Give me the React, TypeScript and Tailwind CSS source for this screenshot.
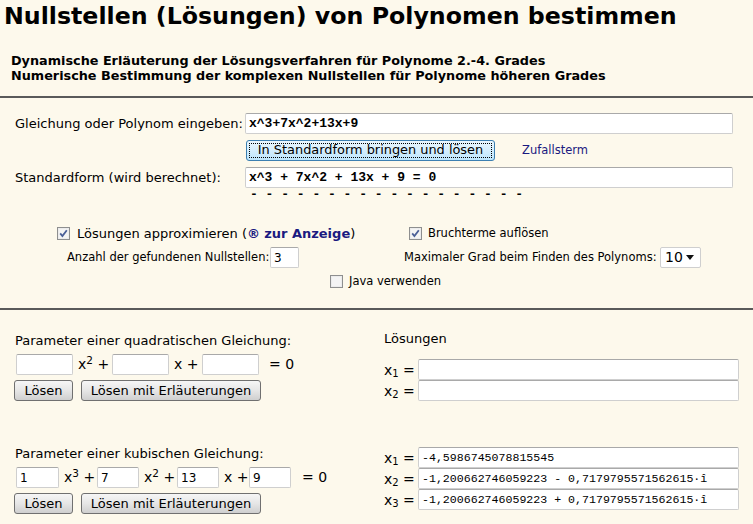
import React from "react";

const inputCls =
  "h-[21px] bg-white border border-[#cfcfcf] border-t-[#a9a9a9] rounded-[2px] px-[3px] outline-none text-black";
const btnCls =
  "h-[21px] rounded-[3px] border border-[#707070] bg-gradient-to-b from-[#f6f6f6] via-[#e6e6e6] to-[#cfcfcf] text-[13px] leading-none text-black whitespace-nowrap";

function Box({ checked }: { checked?: boolean }) {
  return (
    <svg width="13" height="13" viewBox="0 0 13 13" className="shrink-0">
      <rect x="0.5" y="0.5" width="12" height="12" fill="#ececec" stroke="#8e8f8f" />
      <rect x="2" y="2" width="9" height="9" fill="#f4f4f4" />
      {checked && (
        <path d="M3.2 6.4 L5.4 9 L9.8 3.2" fill="none" stroke="#4a5f97" strokeWidth="1.8" />
      )}
    </svg>
  );
}

function Sol({ n, value = "" }: { n: number; value?: string }) {
  return (
    <div className="flex items-center">
      <span className="w-[34px] text-[14px] leading-none">
        x<sub className="text-[10px]">{n}</sub> =
      </span>
      <input
        readOnly
        value={value}
        className={`${inputCls} w-[321px] font-['Liberation_Mono',monospace] text-[11.6px] text-[#111]`}
      />
    </div>
  );
}

export default function App() {
  return (
    <div className="w-[753px] h-[524px] overflow-hidden bg-[#fdf9ec] text-black font-['DejaVu_Sans',Verdana,sans-serif]">
      <h1 className="pl-[4px] pt-[2px] text-[23.7px] leading-[28px] font-bold whitespace-nowrap">
        Nullstellen (Lösungen) von Polynomen bestimmen
      </h1>
      <div className="mt-[23px] pl-[11px] text-[12.8px] leading-[15px] font-bold">
        <div>Dynamische Erläuterung der Lösungsverfahren für Polynome 2.-4. Grades</div>
        <div>Numerische Bestimmung der komplexen Nullstellen für Polynome höheren Grades</div>
      </div>
      <div className="mt-[13px] h-[2px] bg-[#5a5a5a]" />

      <div className="mt-[15px] flex items-center pl-[15px] text-[13px]">
        <span className="w-[230px]">Gleichung oder Polynom eingeben:</span>
        <input
          readOnly
          value="x^3+7x^2+13x+9"
          className={`${inputCls} w-[488px] font-['Liberation_Mono',monospace] text-[13px] font-bold`}
        />
      </div>
      <div className="mt-[6px] flex items-center pl-[246px]">
        <button className="h-[21px] w-[249px] rounded-[3px] border border-[#3c7fb1] bg-gradient-to-b from-[#eaf6fd] to-[#bee6fd] p-[2px] text-[12.9px] leading-none whitespace-nowrap">
          <span className="flex h-full items-center justify-center border border-dotted border-black">
            In Standardform bringen und lösen
          </span>
        </button>
        <span className="ml-[27px] text-[11.5px] text-[#1a1a80]">Zufallsterm</span>
      </div>
      <div className="mt-[6px] flex items-center pl-[15px] text-[13px]">
        <span className="w-[230px]">Standardform (wird berechnet):</span>
        <input
          readOnly
          value="x^3 + 7x^2 + 13x + 9 = 0"
          className={`${inputCls} w-[488px] font-['Liberation_Mono',monospace] text-[13px] font-bold`}
        />
      </div>
      <div className="mt-[1px] pl-[250px] font-['Liberation_Mono',monospace] text-[13px] font-bold leading-[12px] whitespace-pre">
        {"- - - - - - - - - - - - - - - - - -"}
      </div>

      <div className="mt-[26px] flex items-center">
        <div className="flex w-[409px] items-center pl-[57px]">
          <Box checked />
          <span className="ml-[7px] text-[13px] leading-none">
            Lösungen approximieren (<b className="text-[#1a1a80]">®</b>{" "}
            <b className="text-[#1a1a80]">zur Anzeige</b>)
          </span>
        </div>
        <Box checked />
        <span className="ml-[6px] text-[11.5px] leading-none">Bruchterme auflösen</span>
      </div>
      <div className="mt-[7px] flex items-center text-[11.5px]">
        <div className="flex w-[404px] items-center pl-[67px]">
          <span className="w-[203px]">Anzahl der gefundenen Nullstellen:</span>
          <input readOnly value="3" className={`${inputCls} h-[20px] w-[29px] text-[12px]`} />
        </div>
        <span className="w-[256px]">Maximaler Grad beim Finden des Polynoms:</span>
        <div className="flex h-[21px] w-[41px] items-center justify-between rounded-[2px] border border-[#cfcfcf] bg-white pl-[4px] pr-[6px] text-[14px]">
          10
          <svg width="8" height="5" viewBox="0 0 8 5">
            <path d="M0 0 H8 L4 5 Z" fill="#111" />
          </svg>
        </div>
      </div>
      <div className="mt-[7px] flex items-center pl-[330px]">
        <Box />
        <span className="ml-[6px] text-[11.5px] leading-none">Java verwenden</span>
      </div>
      <div className="mt-[20px] h-[2px] bg-[#5a5a5a]" />

      <div className="flex h-[129px] text-[13px]">
        <div className="w-[384px] pl-[15px]">
          <div className="mt-[23px] leading-[15px]">Parameter einer quadratischen Gleichung:</div>
          <div className="mt-[6px] flex items-center pl-[1px] text-[14px]">
            <input readOnly className={`${inputCls} w-[57px]`} />
            <span className="w-[39px] pl-[5px]">
              x<sup>2</sup> +
            </span>
            <input readOnly className={`${inputCls} w-[57px]`} />
            <span className="w-[33px] pl-[5px]">x +</span>
            <input readOnly className={`${inputCls} w-[57px]`} />
            <span className="pl-[10px]">= 0</span>
          </div>
          <div className="mt-[5px] flex gap-[8px]">
            <button className={`${btnCls} -ml-[1px] w-[59px]`}>Lösen</button>
            <button className={`${btnCls} w-[180px]`}>Lösen mit Erläuterungen</button>
          </div>
        </div>
        <div>
          <div className="mt-[21px] leading-[15px]">Lösungen</div>
          <div className="mt-[13px] flex flex-col">
            <Sol n={1} />
            <Sol n={2} />
          </div>
        </div>
      </div>

      <div className="flex text-[13px]">
        <div className="w-[384px] pl-[15px]">
          <div className="mt-[7px] leading-[15px]">Parameter einer kubischen Gleichung:</div>
          <div className="mt-[6px] flex items-center pl-[1px] text-[14px]">
            <input readOnly value="1" className={`${inputCls} w-[43px] text-[12px]`} />
            <span className="w-[38px] pl-[5px]">
              x<sup>3</sup> +
            </span>
            <input readOnly value="7" className={`${inputCls} w-[42px] text-[12px]`} />
            <span className="w-[38px] pl-[5px]">
              x<sup>2</sup> +
            </span>
            <input readOnly value="13" className={`${inputCls} w-[42px] text-[12px]`} />
            <span className="w-[30px] pl-[5px]">x +</span>
            <input readOnly value="9" className={`${inputCls} w-[42px] text-[12px]`} />
            <span className="pl-[11px]">= 0</span>
          </div>
          <div className="mt-[5px] flex gap-[8px]">
            <button className={`${btnCls} -ml-[1px] w-[59px]`}>Lösen</button>
            <button className={`${btnCls} w-[180px]`}>Lösen mit Erläuterungen</button>
          </div>
        </div>
        <div className="mt-[8px] flex flex-col">
          <Sol n={1} value="-4,5986745078815545" />
          <Sol n={2} value="-1,200662746059223 - 0,7179795571562615·î" />
          <Sol n={3} value="-1,200662746059223 + 0,7179795571562615·î" />
        </div>
      </div>
    </div>
  );
}
